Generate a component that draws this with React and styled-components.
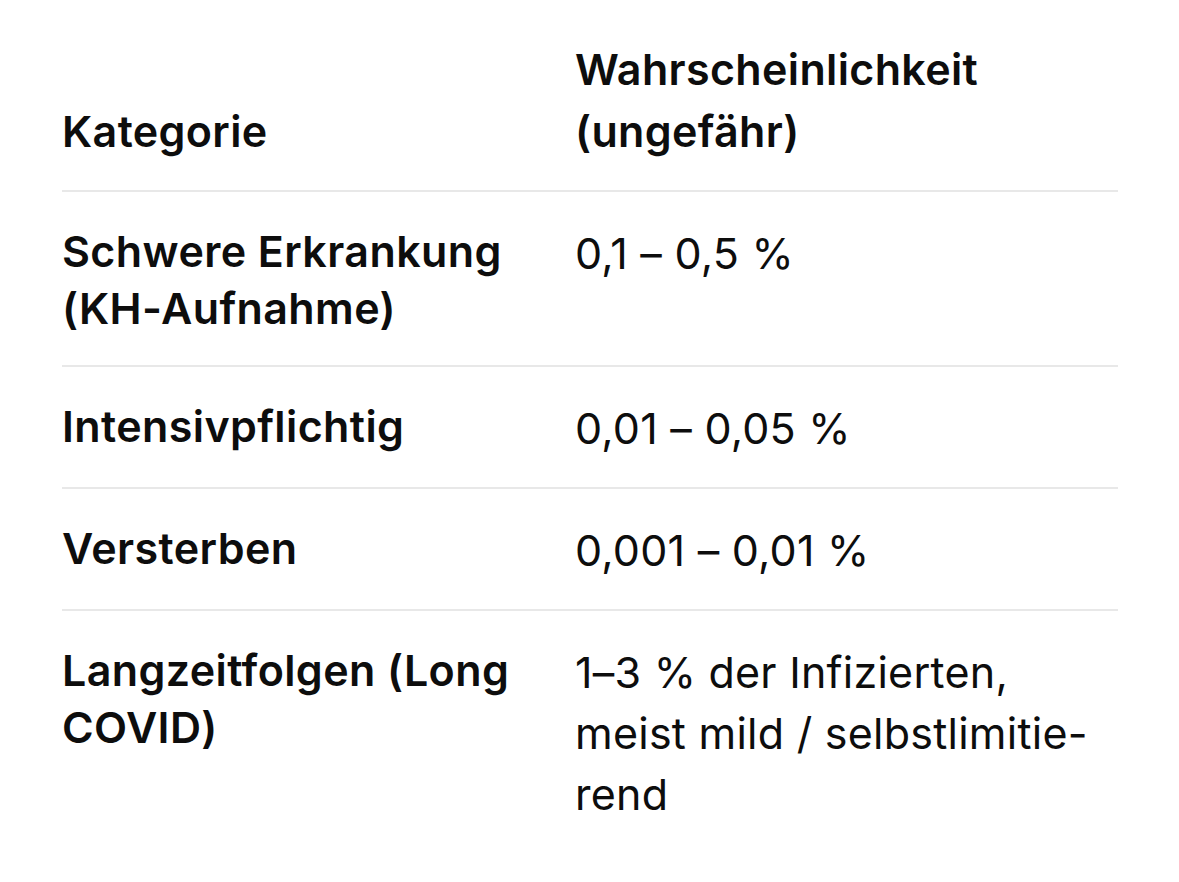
import styled, { createGlobalStyle } from 'styled-components';

const GlobalStyle = createGlobalStyle`
  html, body {
    margin: 0;
    padding: 0;
    background: #ffffff;
  }
  body {
    font-family: 'Inter', 'Noto Sans', sans-serif;
    color: #0d0d0d;
    -webkit-font-smoothing: antialiased;
  }
`;

const rows = [
  { category: ['Schwere Erkrankung', '(KH-Aufnahme)'], value: ['0,1 – 0,5 %'] },
  { category: ['Intensivpflichtig'], value: ['0,01 – 0,05 %'] },
  { category: ['Versterben'], value: ['0,001 – 0,01 %'] },
  {
    category: ['Langzeitfolgen (Long', 'COVID)'],
    value: ['1–3 % der Infizierten,', 'meist mild / selbstlimitie-', 'rend'],
  },
];

export default function App() {
  return (
    <Page>
      <GlobalStyle />
      <Table>
        <Row $head>
          <HeadCell>
            <Line>Kategorie</Line>
          </HeadCell>
          <HeadCell>
            <Line>Wahrscheinlichkeit</Line>
            <Line>(ungefähr)</Line>
          </HeadCell>
        </Row>
        {rows.map((row, i) => (
          <Row key={i} $last={i === rows.length - 1}>
            <LabelCell>
              {row.category.map((t) => (
                <Line key={t}>{t}</Line>
              ))}
            </LabelCell>
            <ValueCell>
              {row.value.map((t) => (
                <Line key={t}>{t}</Line>
              ))}
            </ValueCell>
          </Row>
        ))}
      </Table>
    </Page>
  );
}

const Page = styled.div`
  padding: 7px 61px 40px 62px;
`;

const Table = styled.div`
  display: flex;
  flex-direction: column;
`;

const Row = styled.div`
  display: grid;
  grid-template-columns: 513px 1fr;
  align-items: ${(p) => (p.$head ? 'end' : 'start')};
  border-bottom: ${(p) => (p.$last ? 'none' : '2px solid #e8e8e8')};
`;

const Cell = styled.div`
  padding: 31px 16px 28px 0;
  font-size: 43px;
`;

const HeadCell = styled(Cell)`
  font-weight: 600;
  line-height: 62px;
  letter-spacing: 0.35px;
`;

const LabelCell = styled(Cell)`
  font-weight: 600;
  line-height: 57px;
  letter-spacing: 0.4px;
`;

const ValueCell = styled(Cell)`
  font-weight: 400;
  line-height: 61px;
  letter-spacing: 0.25px;
`;

const Line = styled.div`
  white-space: nowrap;
`;
